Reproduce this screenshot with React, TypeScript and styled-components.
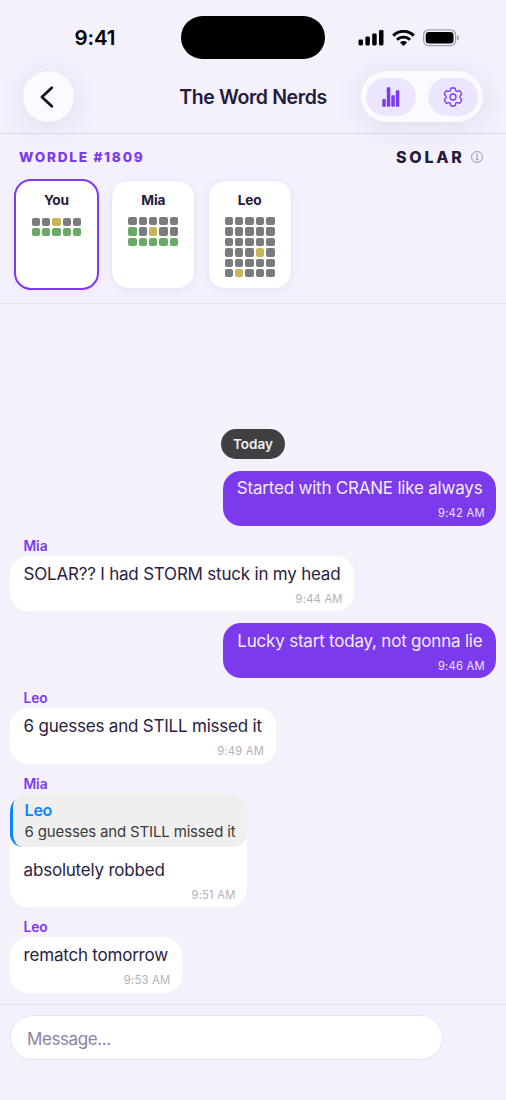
import React from "react";
import styled, { createGlobalStyle } from "styled-components";
import { HiOutlineCog6Tooth } from "react-icons/hi2";

const GlobalStyle = createGlobalStyle`
  * { box-sizing: border-box; }
  body { margin: 0; background: #f4f1fd; }
`;

const Screen = styled.div`
  width: 506px;
  height: 1100px;
  display: flex;
  flex-direction: column;
  overflow: hidden;
  background: #f4f1fd;
  color: #241b3d;
  font-family: Inter, "Liberation Sans", sans-serif;
`;

const StatusBar = styled.div`
  height: 71px;
  flex: none;
  display: grid;
  grid-template-columns: 181px 144px 1fr;
  padding-top: 16px;
`;

const Clock = styled.div`
  padding-left: 74.5px;
  line-height: 44px;
  font-size: 20.5px;
  font-weight: 600;
  letter-spacing: -0.1px;
  color: #000;
`;

const Island = styled.div`
  height: 43px;
  border-radius: 22px;
  background: #000;
`;

const StatusIcons = styled.div`
  height: 43px;
  display: flex;
  align-items: center;
  gap: 8px;
  padding-left: 33px;
`;

const Header = styled.header`
  height: 63px;
  flex: none;
  display: grid;
  grid-template-columns: 157px 1fr 145px;
  align-items: start;
  border-bottom: 1px solid #dedbe6;
`;

const floatShadow = "0 5px 30px rgba(50, 35, 90, 0.1)";

const BackButton = styled.button`
  margin-left: 23px;
  width: 51px;
  height: 51px;
  padding: 0 3px 0 0;
  border: 0;
  border-radius: 50%;
  background: #fcfaff;
  box-shadow: ${floatShadow};
  display: grid;
  place-items: center;
`;

const Title = styled.h1`
  margin: 0;
  padding-right: 12px;
  text-align: center;
  line-height: 53px;
  font-size: 19.5px;
  font-weight: 600;
  letter-spacing: -0.38px;
  white-space: nowrap;
`;

const ActionGroup = styled.div`
  width: 122px;
  height: 51px;
  display: flex;
  align-items: center;
  justify-content: space-between;
  padding: 0 5px;
  border-radius: 26px;
  background: #fcfaff;
  box-shadow: ${floatShadow};
`;

const ActionButton = styled.button`
  width: 50px;
  height: 38px;
  padding: 0;
  border: 0;
  border-radius: 19px;
  background: #ebe6fe;
  color: #7c3aed;
  display: grid;
  place-items: center;
`;

const SettingsIcon = styled(HiOutlineCog6Tooth)`
  width: 24px;
  height: 24px;
  stroke-width: 1.3;
`;

const Puzzle = styled.section`
  height: 170px;
  flex: none;
  border-bottom: 1px solid #e7e1f6;
`;

const PuzzleHead = styled.div`
  height: 45px;
  display: flex;
  align-items: center;
  padding: 0 23px 0 19px;
`;

const PuzzleName = styled.div`
  flex: 1;
  font-size: 13.6px;
  font-weight: 800;
  letter-spacing: 1.75px;
  color: #7c3aed;
`;

const Answer = styled.div`
  font-size: 16px;
  font-weight: 800;
  letter-spacing: 2.7px;
  margin-right: 6.5px;
`;

const Cards = styled.div`
  display: flex;
  align-items: center;
  gap: 12.3px;
  padding-left: 14px;
`;

const Card = styled.div<{ $active?: boolean }>`
  width: ${(p) => (p.$active ? 85 : 84)}px;
  height: ${(p) => (p.$active ? 111 : 109)}px;
  border-radius: 17px;
  border: ${(p) => (p.$active ? "2px solid #7c3aed" : "1px solid #ebe5fa")};
  padding-top: 10px;
  background: #fff;
  box-shadow: 0 2px 8px rgba(124, 58, 237, 0.07);
  display: flex;
  flex-direction: column;
  align-items: center;
  gap: ${(p) => (p.$active ? 8.7 : 8)}px;
`;

const CardName = styled.div`
  line-height: 18px;
  font-size: 13.7px;
  font-weight: 700;
  letter-spacing: -0.15px;
`;

const Tiles = styled.div`
  display: grid;
  grid-template-columns: repeat(5, 8.4px);
  gap: 2px;
`;

const tileColors: Record<string, string> = { x: "#787c7e", y: "#c9b458", g: "#6aaa64" };

const Tile = styled.i<{ $kind: string }>`
  height: 8.4px;
  border-radius: 2px;
  background: ${(p) => tileColors[p.$kind]};
`;

const Chat = styled.main`
  height: 701px;
  flex: none;
  display: flex;
  flex-direction: column;
  justify-content: flex-end;
  padding: 0 9.6px 11.4px;
  border-bottom: 1px solid #e7e1f6;
`;

const DayPill = styled.div`
  align-self: center;
  height: 30px;
  padding: 0 12px;
  border-radius: 15px;
  background: #403f42;
  color: #f0eff2;
  line-height: 30px;
  font-size: 13.5px;
  font-weight: 600;
`;

const Message = styled.div<{ $mine?: boolean }>`
  display: flex;
  flex-direction: column;
  align-items: ${(p) => (p.$mine ? "flex-end" : "flex-start")};
  margin-top: 12px;
`;

const Sender = styled.div`
  height: 18.2px;
  padding-left: 13.8px;
  line-height: 17px;
  font-size: 13.8px;
  font-weight: 600;
  color: #7c3aed;
`;

const Bubble = styled.div<{ $mine?: boolean }>`
  border-radius: 18px;
  overflow: hidden;
  background: ${(p) => (p.$mine ? "#7c3aed" : "#fff")};
  color: ${(p) => (p.$mine ? "#f3ecff" : "#2a2143")};
`;

const BubbleText = styled.div<{ $afterQuote?: boolean }>`
  padding: ${(p) => (p.$afterQuote ? 10.3 : 5.6)}px 14px 0;
  line-height: 24px;
  font-size: 17px;
  letter-spacing: -0.21px;
  white-space: nowrap;
`;

const Time = styled.div<{ $mine?: boolean }>`
  height: 25.6px;
  padding-right: 11.7px;
  line-height: 27px;
  text-align: right;
  font-size: 11.2px;
  letter-spacing: 0.22px;
  color: ${(p) => (p.$mine ? "#eee5ff" : "#b3b1b7")};
`;

const Quote = styled.div`
  height: 53.5px;
  padding: 5.4px 11.7px 0 12px;
  border-left: 3.5px solid #0a84ff;
  border-radius: 13px;
  background: #efefef;
  white-space: nowrap;
`;

const QuoteName = styled.div`
  line-height: 22px;
  font-size: 16px;
  font-weight: 600;
  letter-spacing: -0.25px;
  color: #0a84ff;
`;

const QuoteText = styled.div`
  line-height: 21px;
  font-size: 15px;
  letter-spacing: -0.16px;
  color: #3c3c3e;
`;

const Composer = styled.footer`
  flex: 1;
  padding: 10px 0 0 10px;
`;

const MessageInput = styled.input`
  display: block;
  width: 433px;
  height: 45px;
  padding: 3px 16px 0;
  border: 1px solid #e7e1f6;
  border-radius: 23px;
  background: #fff;
  font: 400 17px Inter, "Liberation Sans", sans-serif;
  letter-spacing: -0.4px;
  outline: 0;
  &::placeholder { color: #8b83a6; opacity: 1; }
`;

const players = [
  { name: "You", rows: ["xxyxx", "ggggg"] },
  { name: "Mia", rows: ["xxxxx", "gxyxx", "ggggg"] },
  { name: "Leo", rows: ["xxxxx", "xxxxx", "xxxxx", "xxxyx", "xxxxx", "xyxxx"] },
];

type Entry = { from?: string; text: string; time: string; quote?: { name: string; text: string } };

const messages: Entry[] = [
  { text: "Started with CRANE like always", time: "9:42 AM" },
  { from: "Mia", text: "SOLAR?? I had STORM stuck in my head", time: "9:44 AM" },
  { text: "Lucky start today, not gonna lie", time: "9:46 AM" },
  { from: "Leo", text: "6 guesses and STILL missed it", time: "9:49 AM" },
  {
    from: "Mia",
    text: "absolutely robbed",
    time: "9:51 AM",
    quote: { name: "Leo", text: "6 guesses and STILL missed it" },
  },
  { from: "Leo", text: "rematch tomorrow", time: "9:53 AM" },
];

const SignalIcon = () => (
  <svg width="26" height="16" viewBox="0 0 26 16">
    <rect x="0.5" y="9.6" width="4.5" height="5.8" rx="1.3" />
    <rect x="7.4" y="6.6" width="4.5" height="8.8" rx="1.3" />
    <rect x="14.2" y="3.4" width="4.5" height="12" rx="1.3" />
    <rect x="21" y="0" width="4.5" height="15.4" rx="1.3" />
  </svg>
);

const WifiIcon = () => (
  <svg width="23" height="16" viewBox="0 0 23 16" fill="none" stroke="#000" strokeWidth="2.9">
    <path d="M1.2 5.6a14.6 14.6 0 0 1 20.6 0" />
    <path d="M5 9.8a9.2 9.2 0 0 1 13 0" />
    <path d="M8 12.5a5 5 0 0 1 7 0L11.5 16z" fill="#000" stroke="none" />
  </svg>
);

const BatteryIcon = () => (
  <svg width="37" height="18" viewBox="0 0 37 18">
    <rect x="0.6" y="0.8" width="32" height="15.8" rx="5" fill="none" stroke="#a3a1a9" strokeWidth="1.2" />
    <rect x="2.7" y="2.9" width="27.8" height="11.6" rx="3.3" />
    <path d="M34 5.9c2.6.9 2.6 4.7 0 5.6z" fill="#a3a1a9" />
  </svg>
);

const BackIcon = () => (
  <svg width="16" height="24" viewBox="0 0 16 24" fill="none" stroke="#17151b" strokeWidth="2.8" strokeLinecap="round" strokeLinejoin="round">
    <path d="M12.8 2.7 2.9 12l9.9 9.3" />
  </svg>
);

const ChartIcon = () => (
  <svg width="18" height="20" viewBox="0 0 18 20" fill="currentColor">
    <rect x="0.3" y="12" width="3.5" height="7.7" rx="0.8" />
    <rect x="4.8" y="0.2" width="3.5" height="19.5" rx="0.8" />
    <rect x="9.3" y="8.2" width="3.5" height="11.5" rx="0.8" />
    <rect x="13.8" y="3.2" width="3.5" height="16.5" rx="0.8" />
  </svg>
);

const InfoIcon = () => (
  <svg width="12" height="12" viewBox="0 0 12 12" fill="none" stroke="#9289ab" strokeWidth="0.9">
    <circle cx="6" cy="6" r="5.45" />
    <path d="M4.9 5.1h1.3v3.5M4.7 8.7h2.9" />
    <circle cx="6" cy="3.2" r="0.75" fill="#9289ab" stroke="none" />
  </svg>
);

export default function App() {
  return (
    <Screen>
      <GlobalStyle />
      <StatusBar>
        <Clock>9:41</Clock>
        <Island />
        <StatusIcons>
          <SignalIcon />
          <WifiIcon />
          <BatteryIcon />
        </StatusIcons>
      </StatusBar>
      <Header>
        <BackButton aria-label="Back"><BackIcon /></BackButton>
        <Title>The Word Nerds</Title>
        <ActionGroup>
          <ActionButton aria-label="Stats"><ChartIcon /></ActionButton>
          <ActionButton aria-label="Settings"><SettingsIcon /></ActionButton>
        </ActionGroup>
      </Header>
      <Puzzle>
        <PuzzleHead>
          <PuzzleName>WORDLE #1809</PuzzleName>
          <Answer>SOLAR</Answer>
          <InfoIcon />
        </PuzzleHead>
        <Cards>
          {players.map((p, i) => (
            <Card key={p.name} $active={i === 0}>
              <CardName>{p.name}</CardName>
              <Tiles>
                {p.rows.join("").split("").map((kind, n) => (
                  <Tile key={n} $kind={kind} />
                ))}
              </Tiles>
            </Card>
          ))}
        </Cards>
      </Puzzle>
      <Chat>
        <DayPill>Today</DayPill>
        {messages.map((m) => (
          <Message key={m.time} $mine={!m.from}>
            {m.from && <Sender>{m.from}</Sender>}
            <Bubble $mine={!m.from}>
              {m.quote && (
                <Quote>
                  <QuoteName>{m.quote.name}</QuoteName>
                  <QuoteText>{m.quote.text}</QuoteText>
                </Quote>
              )}
              <BubbleText $afterQuote={!!m.quote}>{m.text}</BubbleText>
              <Time $mine={!m.from}>{m.time}</Time>
            </Bubble>
          </Message>
        ))}
      </Chat>
      <Composer>
        <MessageInput placeholder="Message..." />
      </Composer>
    </Screen>
  );
}
